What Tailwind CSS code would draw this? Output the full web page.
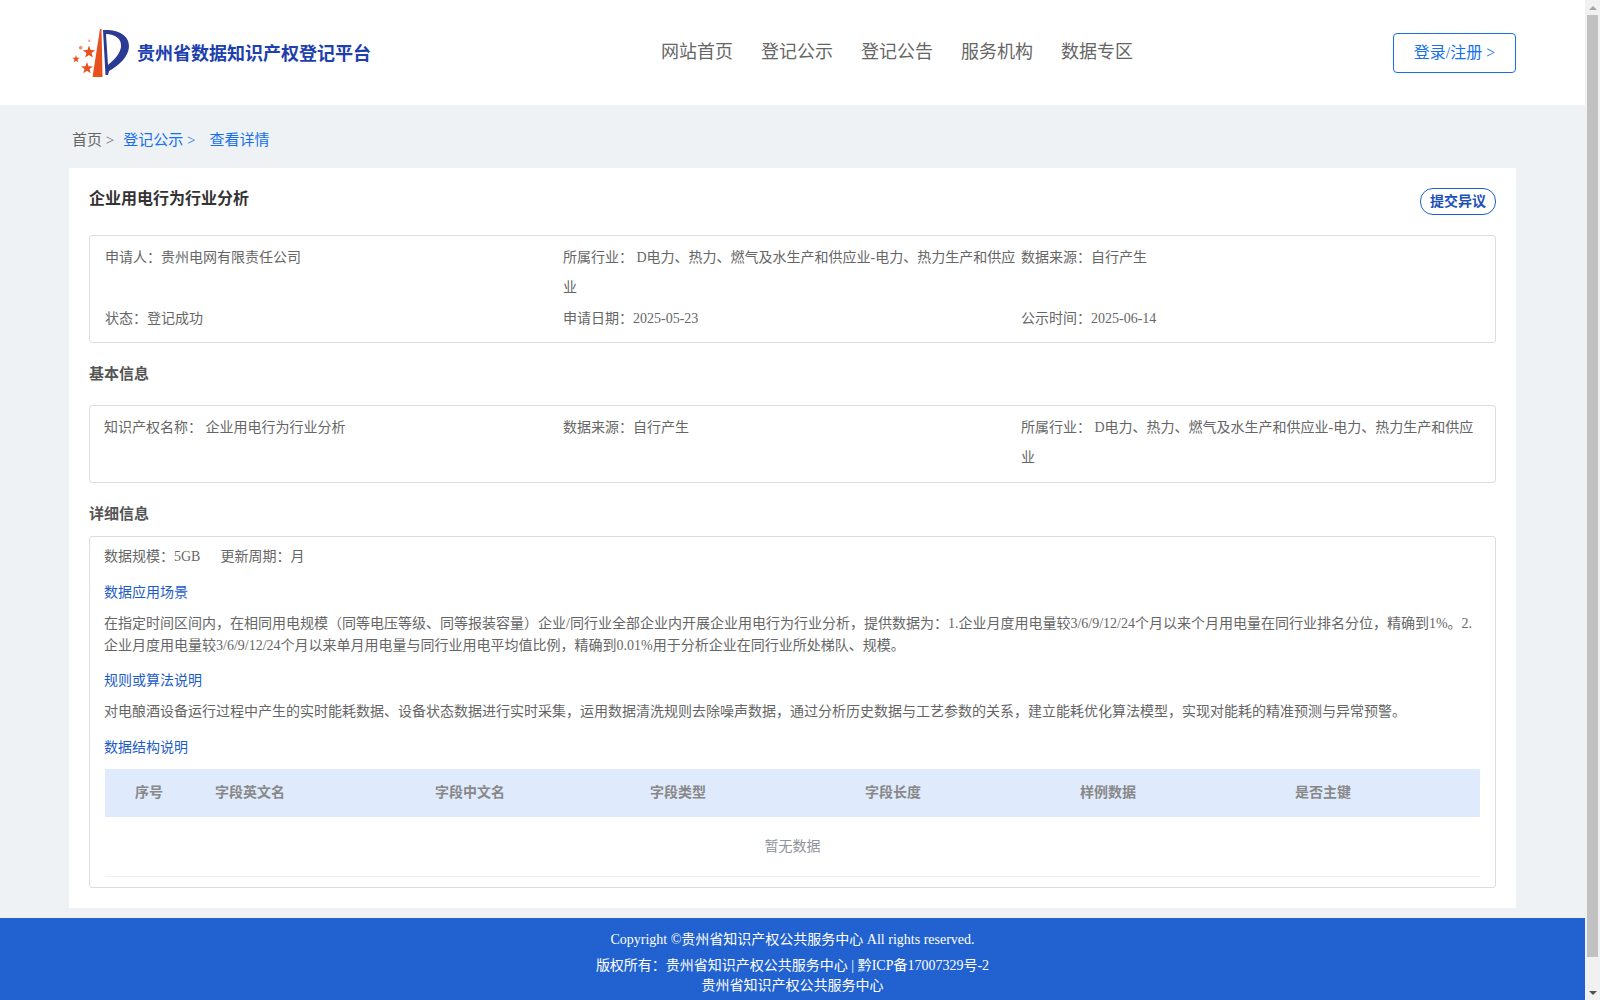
<!DOCTYPE html>
<html lang="zh">
<head>
<meta charset="utf-8">
<title>贵州省数据知识产权登记平台</title>
<script src="https://cdn.jsdelivr.net/npm/@tailwindcss/browser@4"></script>
</head>
<body class="h-[1000px] overflow-hidden bg-[#eff2f5] font-['Liberation_Serif','Noto_Sans_CJK_SC',serif] text-[14px] text-[#666]">
<div class="flex h-[1000px]">
  <div class="w-[1585px] h-[1000px] overflow-hidden flex flex-col">
    <header class="h-[105px] bg-white flex items-center pl-[72px] pr-[69px] shrink-0">
      <div class="flex items-center w-[500px]">
        <svg class="w-[58px] h-[50px] shrink-0" viewBox="0 0 58 50">
          <path d="M28 1 L29.5 1 L30.5 49 L20.5 49 Z" fill="#e8501e"/>
          <path fill-rule="evenodd" d="M31 2 C44 1 57 6 57 18 C57 29 46 38 37 43 L36 47 L33.5 47 Z M34 6 C43 6 50 11 49 19 C48 26 42 32 36 37 Z" fill="#2b3a92"/>
          <path d="M17 17.5 L18.6 22 L23.2 22.2 L19.6 25.1 L20.8 29.6 L17 27 L13.2 29.6 L14.4 25.1 L10.8 22.2 L15.4 22 Z" fill="#e8501e"/>
          <path d="M15 34 L16.5 38.2 L21 38.4 L17.5 41 L18.7 45.3 L15 42.8 L11.3 45.3 L12.5 41 L9 38.4 L13.5 38.2 Z" fill="#e8501e"/>
          <path d="M4 27 L4.9 29.7 L7.8 29.8 L5.5 31.5 L6.3 34.3 L4 32.7 L1.7 34.3 L2.5 31.5 L.2 29.8 L3.1 29.7 Z" fill="#e8501e"/>
          <circle cx="8.7" cy="19.7" r="1.8" fill="#ef8a60"/>
          <circle cx="17.3" cy="12.7" r="1.2" fill="#f2a585"/>
        </svg>
        <span class="ml-[7px] pt-[4px] text-[18px] font-bold text-[#1d40ae] whitespace-nowrap">贵州省数据知识产权登记平台</span>
      </div>
      <nav class="flex gap-[28px] ml-[89px] text-[18px] text-[#666]">
        <a>网站首页</a><a>登记公示</a><a>登记公告</a><a>服务机构</a><a>数据专区</a>
      </nav>
      <a class="ml-auto w-[123px] h-[40px] border border-[#1a6fe8] rounded-[4px] flex items-center justify-center text-[16px] text-[#1570ef]">登录/注册 &gt;</a>
    </header>
    <div class="pl-[72px] h-[63px] flex items-center text-[15px] pt-[7px]">
      <span>首页 &gt;</span>
      <span class="ml-[9px] text-[#1570ef]">登记公示 &gt;</span>
      <span class="ml-[14px] text-[#1570ef]">查看详情</span>
    </div>
    <main class="mx-[69px] w-[1447px] h-[740px] bg-white px-[20px] shrink-0">
      <div class="flex items-start justify-between h-[67px] pt-[20px]">
        <h1 class="text-[16px] font-bold text-[#333] leading-[22px]">企业用电行为行业分析</h1>
        <button class="w-[76px] h-[27px] border border-[#1e5fcc] rounded-[13px] text-[14px] font-bold text-[#1a50b8] flex items-center justify-center">提交异议</button>
      </div>
      <section class="border border-[#ddd] rounded-[3px] px-[15px] py-[7px] grid grid-cols-[458px_458px_1fr] leading-[30px] h-[108px]">
        <div>申请人：贵州电网有限责任公司</div>
        <div>所属行业： D电力、热力、燃气及水生产和供应业-电力、热力生产和供应业</div>
        <div>数据来源：自行产生</div>
        <div>状态：登记成功</div>
        <div>申请日期：2025-05-23</div>
        <div>公示时间：2025-06-14</div>
      </section>
      <h2 class="h-[62px] flex items-center text-[15px] font-bold text-[#555]">基本信息</h2>
      <section class="border border-[#ddd] rounded-[3px] pl-[14px] pr-[15px] py-[7px] grid grid-cols-[459px_458px_1fr] leading-[30px] h-[78px]">
        <div>知识产权名称： 企业用电行为行业分析</div>
        <div>数据来源：自行产生</div>
        <div>所属行业： D电力、热力、燃气及水生产和供应业-电力、热力生产和供应业</div>
      </section>
      <h2 class="h-[53px] pt-[10px] flex items-center text-[15px] font-bold text-[#555]">详细信息</h2>
      <section class="border border-[#ddd] rounded-[3px] pl-[14px] pr-[15px] h-[352px] pt-[9px]">
        <div class="flex gap-[20px] leading-[22px]"><span>数据规模：5GB</span><span>更新周期：月</span></div>
        <h3 class="mt-[14px] leading-[22px] text-[#1d5cc8]">数据应用场景</h3>
        <p class="mt-[9px] leading-[22px]">在指定时间区间内，在相同用电规模（同等电压等级、同等报装容量）企业/同行业全部企业内开展企业用电行为行业分析，提供数据为：1.企业月度用电量较3/6/9/12/24个月以来个月用电量在同行业排名分位，精确到1%。2.企业月度用电量较3/6/9/12/24个月以来单月用电量与同行业用电平均值比例，精确到0.01%用于分析企业在同行业所处梯队、规模。</p>
        <h3 class="mt-[13px] leading-[22px] text-[#1d5cc8]">规则或算法说明</h3>
        <p class="mt-[9px] leading-[22px]">对电酿酒设备运行过程中产生的实时能耗数据、设备状态数据进行实时采集，运用数据清洗规则去除噪声数据，通过分析历史数据与工艺参数的关系，建立能耗优化算法模型，实现对能耗的精准预测与异常预警。</p>
        <h3 class="mt-[14px] leading-[22px] text-[#1d5cc8]">数据结构说明</h3>
        <div class="mt-[10px] ml-[1px] h-[48px] pb-[1px] bg-[#dfebfd] flex items-center font-bold text-[#888]">
          <span class="w-[110px] pl-[30px]">序号</span>
          <span class="w-[220px]">字段英文名</span>
          <span class="w-[215px]">字段中文名</span>
          <span class="w-[215px]">字段类型</span>
          <span class="w-[215px]">字段长度</span>
          <span class="w-[215px]">样例数据</span>
          <span>是否主键</span>
        </div>
        <div class="ml-[1px] h-[60px] flex items-center justify-center border-b border-[#ebeef5] text-[#909399]">暂无数据</div>
      </section>
    </main>
    <footer class="mt-[10px] h-[82px] bg-[#2162d0] text-white text-center shrink-0 pt-[12px]">
      <p class="leading-[20px]">Copyright ©贵州省知识产权公共服务中心 All rights reserved.</p>
      <p class="mt-[6px] leading-[20px]">版权所有：贵州省知识产权公共服务中心 | 黔ICP备17007329号-2</p>
      <p class="leading-[20px]">贵州省知识产权公共服务中心</p>
    </footer>
  </div>
  <aside class="w-[15px] h-[1000px] bg-[#f1f1f1] flex flex-col items-center shrink-0">
    <div class="h-[15px] flex items-center justify-center shrink-0">
      <div class="w-0 h-0 border-x-[4px] border-x-transparent border-b-[4px] border-b-[#a3a3a3]"></div>
    </div>
    <div class="w-[11px] h-[942px] bg-[#c1c1c1] shrink-0"></div>
    <div class="flex-1 flex items-end pb-[5px]">
      <div class="w-0 h-0 border-x-[4px] border-x-transparent border-t-[4px] border-t-[#505050]"></div>
    </div>
  </aside>
</div>
</body>
</html>
